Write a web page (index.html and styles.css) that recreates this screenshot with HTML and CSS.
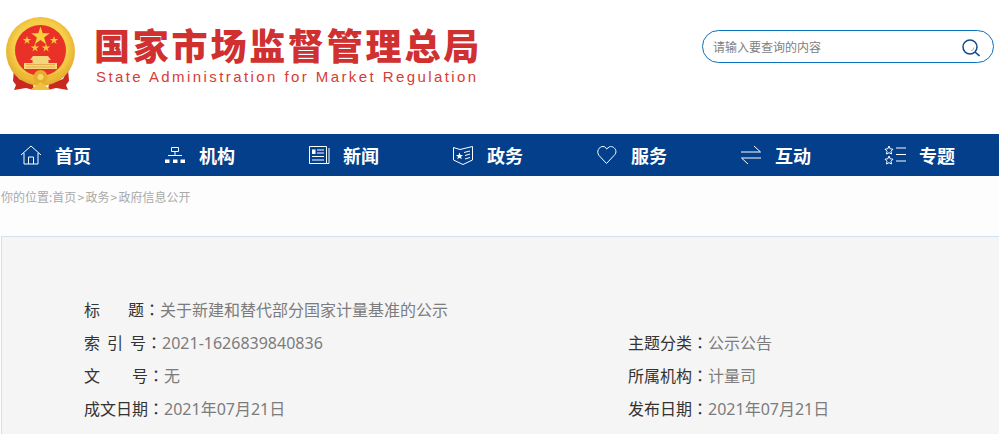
FILE: index.html
```html
<!DOCTYPE html>
<html lang="zh-CN">
<head>
    <meta charset="UTF-8">
    <meta name="viewport" content="width=device-width, initial-scale=1.0">
    <title>关于新建和替代部分国家计量基准的公示</title>
    <link rel="stylesheet" href="styles.css">
</head>
<body>

    <!-- 页头 -->
    <header class="header">
        <div class="logo">
            <svg class="emblem" viewBox="0 0 70 74" width="70" height="74">
                <defs>
                    <radialGradient id="gold" cx="50%" cy="45%" r="55%">
                        <stop offset="70%" stop-color="#f6cf4a"/>
                        <stop offset="100%" stop-color="#e2a92c"/>
                    </radialGradient>
                </defs>
                <!-- 绶带 -->
                <path d="M8 52 L13 62 L27 67 L28 73 L20 71 L8 73 L10 68 L7 64 Z" fill="#c9281f"/>
                <path d="M62 52 L57 62 L43 67 L42 73 L50 71 L62 73 L60 68 L63 64 Z" fill="#c9281f"/>
                <!-- 金环 -->
                <circle cx="34.500" cy="34.500" r="34.500" fill="url(#gold)"/>
                <circle cx="34.500" cy="33.500" r="25.500" fill="#ea3127"/>
                <!-- 五星 -->
                <polygon points="40,9.500 42.200,16.300 49.300,16.300 43.600,20.500 45.700,27.300 40,23.100 34.300,27.300 36.400,20.500 30.700,16.300 37.800,16.300" fill="#f8d23c" transform="translate(-5.500 0)"/>
                <polygon points="21,19 22,22 25.200,22 22.600,23.900 23.600,27 21,25.100 18.400,27 19.400,23.900 16.800,22 20,22" fill="#f5c93a"/>
                <polygon points="48,19 49,22 52.200,22 49.600,23.900 50.600,27 48,25.100 45.400,27 46.400,23.900 43.800,22 47,22" fill="#f5c93a"/>
                <polygon points="29,26.500 30,29.500 33.200,29.500 30.600,31.400 31.600,34.500 29,32.600 26.400,34.500 27.400,31.400 24.800,29.500 28,29.500" fill="#f5c93a"/>
                <polygon points="40,26.500 41,29.500 44.200,29.500 41.600,31.400 42.600,34.500 40,32.600 37.400,34.500 38.400,31.400 35.800,29.500 39,29.500" fill="#f5c93a"/>
                <!-- 天安门 -->
                <path d="M27 39 H42 L45 43 H42.500 V46 H51 V52 H18 V46 H26.500 V43 H24 Z" fill="#f4d67c"/>
                <path d="M20 47.500 H49 M20 50 H49" stroke="#d9952a" stroke-width="0.600"/>
                <path d="M9 51 Q34.500 68 60 51 L58 56 Q34.500 73 11 56 Z" fill="#eeb936"/>
                <circle cx="34.500" cy="60" r="7" fill="#e7ac2d"/>
                <circle cx="34.500" cy="60" r="3" fill="#f7d765"/>
                <path d="M24 73 L34.500 65 L45 73 Z" fill="#f0c240"/>
            </svg>
            <div class="logo-text">
                <div class="logo-cn">国家市场监督管理总局</div>
                <div class="logo-en">State Administration for Market Regulation</div>
            </div>
        </div>
        <div class="search">
            <span class="search-text">请输入要查询的内容</span>
            <svg class="search-icon" viewBox="0 0 18 18" width="18" height="18">
                <circle cx="8" cy="8" r="7" fill="none" stroke="#144a8c" stroke-width="1.500"/>
                <path d="M13 13 L17.500 17" stroke="#144a8c" stroke-width="1.600" fill="none"/>
                <path d="M12 8.500 A4.200 4.200 0 0 1 9 12" stroke="#9db6d4" stroke-width="1" fill="none"/>
            </svg>
        </div>
    </header>

    <!-- 导航 -->
    <nav class="nav">
        <a class="nav-item">
            <svg viewBox="0 0 22 20" width="22" height="20" class="nav-icon">
                <path d="M1 10 L11 1 L21 10 M4 8 V19 H18 V8 M8.500 19 V12 H13.500 V19"/>
            </svg>
            <span>首页</span>
        </a>
        <a class="nav-item">
            <svg viewBox="0 0 22 20" width="22" height="20" class="nav-icon">
                <path d="M7.500 2.500 H14.500 V6.500 H7.500 Z M11 6.500 V10 M4 10.500 H18"/>
                <path class="solid" d="M1 14.500 H5.500 V18 H1 Z M9 14.500 H13.500 V18 H9 Z M16.500 14.500 H21 V18 H16.500 Z"/>
            </svg>
            <span>机构</span>
        </a>
        <a class="nav-item">
            <svg viewBox="0 0 22 20" width="22" height="20" class="nav-icon">
                <path d="M1.500 1.500 H18.500 V18.500 H1.500 Z M21 3 V18.500 H18.500"/>
                <path d="M9 5 H16 M9 8 H16 M4 11.500 H16 M4 15 H16"/>
                <path class="solid" d="M4 4.500 H7.500 V9 H4 Z"/>
            </svg>
            <span>新闻</span>
        </a>
        <a class="nav-item">
            <svg viewBox="0 0 22 20" width="22" height="20" class="nav-icon">
                <path d="M1.500 2.500 L8 4.500 L20.500 1.500 V15 L11 19.500 L1.500 15 Z"/>
                <path d="M12 7.500 L18 6 M13 10.500 L18 9 M13 14 L18 12.500"/>
                <path class="solid" d="M7.500 7.500 L8.500 10 H11 L9 11.700 L9.800 14.300 L7.500 12.800 L5.200 14.300 L6 11.700 L4 10 H6.500 Z"/>
            </svg>
            <span>政务</span>
        </a>
        <a class="nav-item">
            <svg viewBox="0 0 22 20" width="22" height="20" class="nav-icon">
                <path d="M10.500 18.500 L3 10.500 C0 6.500 3 1.500 7 1.500 C9 1.500 10 2.700 10.500 4 L13.500 1.800 C16 1 19 2.500 19.800 5.500 C20.300 7.500 19.500 9 18 10.500 Z"/>
            </svg>
            <span>服务</span>
        </a>
        <a class="nav-item">
            <svg viewBox="0 0 22 20" width="22" height="20" class="nav-icon">
                <path d="M14 1 L20.500 7 H1 M8 19 L1.500 13 H21"/>
            </svg>
            <span>互动</span>
        </a>
        <a class="nav-item">
            <svg viewBox="0 0 22 20" width="22" height="20" class="nav-icon">
                <path d="M5 1 L6.200 3.800 L9 4.200 L7 6.200 L7.500 9 L5 7.700 L2.500 9 L3 6.200 L1 4.200 L3.800 3.800 Z"/>
                <path d="M5 11 L6.200 13.800 L9 14.200 L7 16.200 L7.500 19 L5 17.700 L2.500 19 L3 16.200 L1 14.200 L3.800 13.800 Z"/>
                <path d="M12 3 H22 M12 9.500 H22 M12 16 H22"/>
            </svg>
            <span>专题</span>
        </a>
    </nav>

    <main class="page">
        <div class="crumb">你的位置:首页<span class="sep">&gt;</span>政务<span class="sep">&gt;</span>政府信息公开</div>

        <section class="panel">
            <div class="info-row">
                <div class="info-cell"><span class="label">标&nbsp;&nbsp;&nbsp;&nbsp;题<i class="colon" lang="zh-TW">：</i></span>关于新建和替代部分国家计量基准的公示</div>
            </div>
            <div class="info-row">
                <div class="info-cell"><span class="label">索 引 号<i class="colon" lang="zh-TW">：</i></span>2021-1626839840836</div>
                <div class="info-cell"><span class="label">主题分类<i class="colon" lang="zh-TW">：</i></span>公示公告</div>
            </div>
            <div class="info-row">
                <div class="info-cell"><span class="label">文&emsp;&emsp;号<i class="colon" lang="zh-TW">：</i></span>无</div>
                <div class="info-cell"><span class="label">所属机构<i class="colon" lang="zh-TW">：</i></span>计量司</div>
            </div>
            <div class="info-row">
                <div class="info-cell"><span class="label">成文日期<i class="colon" lang="zh-TW">：</i></span>2021年07月21日</div>
                <div class="info-cell"><span class="label">发布日期<i class="colon" lang="zh-TW">：</i></span>2021年07月21日</div>
            </div>
        </section>
    </main>

</body>
</html>
```

FILE: styles.css
```css
/* 基本样式 */
html, body {
    margin: 0;
    padding: 0;
}
body {
    font-family: "Liberation Sans", "Noto Sans CJK SC", sans-serif;
    background-color: #fff;
}

/* ========== 页头 ========== */
.header {
    height: 134px;
    display: flex;
    justify-content: space-between;
    align-items: flex-start;
    box-sizing: border-box;
    padding: 17px 5px 0 6px;
}
.logo {
    display: flex;
    align-items: flex-start;
}
.emblem {
    display: block;
}
.logo-text {
    margin-left: 18px;
    padding-top: 6px;
}
.logo-cn {
    font-family: "Noto Sans CJK SC", sans-serif;
    font-size: 36px;
    line-height: 42px;
    font-weight: 900;
    letter-spacing: 2.8px;
    color: #d03030;
    white-space: nowrap;
}
.logo-en {
    font-size: 15px;
    line-height: 18px;
    letter-spacing: 2.42px;
    color: #d83c36;
    margin-top: 3px;
    margin-left: 2px;
    white-space: nowrap;
}

/* 搜索框 */
.search {
    width: 292px;
    height: 33px;
    margin-top: 13px;
    box-sizing: border-box;
    border: 1px solid #0b72c0;
    border-radius: 17px;
    display: flex;
    align-items: center;
    justify-content: space-between;
    padding: 0 13px 0 10px;
    background-color: #fff;
}
.search-text {
    font-family: "Noto Sans CJK SC", sans-serif;
    font-size: 12px;
    color: #808080;
}
.search-icon {
    display: block;
    margin-top: 3px;
}

/* ========== 导航 ========== */
.nav {
    height: 42px;
    background-color: #033f8b;
    display: flex;
    padding-left: 20px;
}
.nav-item {
    width: 144px;
    flex: none;
    display: flex;
    align-items: center;
    color: #fff;
    font-family: "Noto Sans CJK SC", sans-serif;
    font-size: 18px;
    font-weight: 700;
}
.nav-item:last-child {
    width: auto;
}
.nav-icon {
    display: block;
    margin-right: 13px;
    fill: none;
    stroke: #fff;
    stroke-width: 1;
}
.nav-icon .solid {
    fill: #fff;
    stroke: none;
}

/* ========== 内容 ========== */
.page {
    background-color: #fdfdfd;
    height: 258px;
    box-sizing: border-box;
    padding-left: 1px;
    overflow: hidden;
}
.crumb {
    font-family: "Noto Sans CJK SC", sans-serif;
    font-size: 12px;
    line-height: 16px;
    color: #aaaaaa;
    padding-top: 13px;
    height: 47px;
}
.sep {
    margin: 0 1.2px;
}
.panel {
    box-sizing: border-box;
    background-color: #f5f5f5;
    border-top: 1px solid #d3e0ee;
    border-left: 1px solid #d3e0ee;
    padding: 56px 0 0 82px;
    height: 198px;
}
.info-row {
    display: flex;
    height: 33px;
    line-height: 33px;
    font-size: 16px;
    font-family: "Noto Sans", "Noto Sans CJK SC", sans-serif;
    color: #7c7c7c;
}
.info-cell {
    width: 544px;
    flex: none;
    white-space: nowrap;
}
.info-cell:nth-child(2) {
    width: auto;
    flex: 1;
}
.label {
    color: #333;
    word-spacing: 2.85px;
}
.colon {
    font-family: "Noto Sans CJK TC", sans-serif;
    font-style: normal;
}
```
